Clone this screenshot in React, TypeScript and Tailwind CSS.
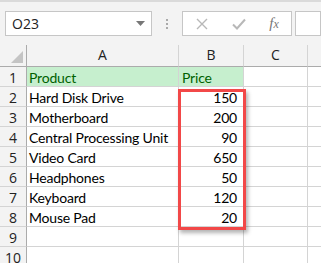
import React from "react";

const rows: [string, string][] = [
  ["Product", "Price"],
  ["Hard Disk Drive", "150"],
  ["Motherboard", "200"],
  ["Central Processing Unit", "90"],
  ["Video Card", "650"],
  ["Headphones", "50"],
  ["Keyboard", "120"],
  ["Mouse Pad", "20"],
  ["", ""],
  ["", ""],
];

export default function App() {
  const font = { fontFamily: "Lato, 'Open Sans', sans-serif" };
  const ui = { fontFamily: "'Segoe UI', 'Open Sans', sans-serif" };
  return (
    <div className="w-[321px] h-[263px] overflow-hidden bg-white relative" style={font}>
      {/* toolbar */}
      <div className="h-[45px] bg-[#f3f3f3] border-t-2 border-[#dadada] flex items-start pt-[9px]">
        <div className="ml-[5px] w-[147px] h-[25px] bg-white border border-[#c6c6c6] flex items-center pl-[6px] pr-[6px] text-[14px] text-[#222]">
          <span className="flex-1" style={ui}>O23</span>
          <svg width="9" height="5" viewBox="0 0 9 5"><path d="M0 0h9L4.5 5z" fill="#777" /></svg>
        </div>
        <div className="w-[30px] h-[25px] flex flex-col items-center justify-center gap-[2px]">
          <div className="w-[2px] h-[2px] bg-[#aaa]" />
          <div className="w-[2px] h-[2px] bg-[#aaa]" />
          <div className="w-[2px] h-[2px] bg-[#aaa]" />
        </div>
        <div className="w-[110px] h-[25px] bg-white border border-[#c6c6c6] flex items-center">
          <div className="w-[37px] flex justify-center">
            <svg width="12" height="12" viewBox="0 0 12 12"><path d="M1 1l10 10M11 1L1 11" stroke="#b8b8b8" strokeWidth="1.4" /></svg>
          </div>
          <div className="w-[37px] flex justify-center">
            <svg width="14" height="12" viewBox="0 0 14 12"><path d="M1 6.5l4 4L13 1.5" stroke="#b8b8b8" strokeWidth="2" fill="none" /></svg>
          </div>
          <div className="w-[34px] flex justify-center items-baseline text-[15px] italic text-[#777]" style={{ fontFamily: "'Liberation Serif', serif" }}>
            f<span className="text-[12px]">x</span>
          </div>
        </div>
        <div className="ml-[3px] flex-1 h-[25px] bg-white border border-[#c6c6c6]" />
      </div>
      {/* grid */}
      <div className="grid grid-cols-[27px_152px_65px_64px_1fr]">
        {/* header row */}
        <div className="h-[22px] bg-[#f3f3f3] border-r border-b border-[#ababab] relative">
          <svg className="absolute right-[3px] bottom-[3px]" width="12" height="12" viewBox="0 0 12 12"><path d="M12 0V12H0z" fill="#c4c4c4" /></svg>
        </div>
        {["A", "B", "C"].map((c) => (
          <div key={c} className="h-[22px] bg-[#f3f3f3] border-r border-b border-r-[#d4d4d4] border-b-[#ababab] flex items-end justify-center pb-[1px] text-[14px] text-[#222]" style={ui}>
            {c}
          </div>
        ))}
        <div className="h-[22px] bg-[#f3f3f3] border-b border-[#ababab]" />
        {rows.map((r, i) => (
          <React.Fragment key={i}>
            <div className="h-[20px] bg-[#f3f3f3] border-r border-b border-r-[#ababab] border-b-[#d4d4d4] flex items-center justify-center text-[14px] text-[#222] pt-[1px]" style={ui}>
              {i + 1}
            </div>
            <div className={`h-[20px] border-r border-b border-[#d4d4d4] flex items-center pl-[2px] pt-[1px] text-[14px] tracking-[-0.2px] whitespace-nowrap ${i === 0 ? "bg-[#c6efce] text-[#006100]" : "text-black"}`}>
              {r[0]}
            </div>
            <div className={`h-[20px] border-r border-b border-[#d4d4d4] flex items-center pt-[1px] text-[14px] tracking-[-0.2px] ${i === 0 ? "bg-[#c6efce] text-[#006100] justify-start pl-[3px]" : "justify-end pr-[6px] text-black"}`}>
              {r[1]}
            </div>
            <div className="h-[20px] border-r border-b border-[#d4d4d4]" />
            <div className="h-[20px] border-b border-[#d4d4d4]" />
          </React.Fragment>
        ))}
      </div>
      {/* red highlight */}
      <div className="absolute left-[178px] top-[89px] w-[68px] h-[141px] border-[3px] border-[#f24848] shadow-[2px_3px_4px_rgba(0,0,0,0.3)] z-30" />
    </div>
  );
}
